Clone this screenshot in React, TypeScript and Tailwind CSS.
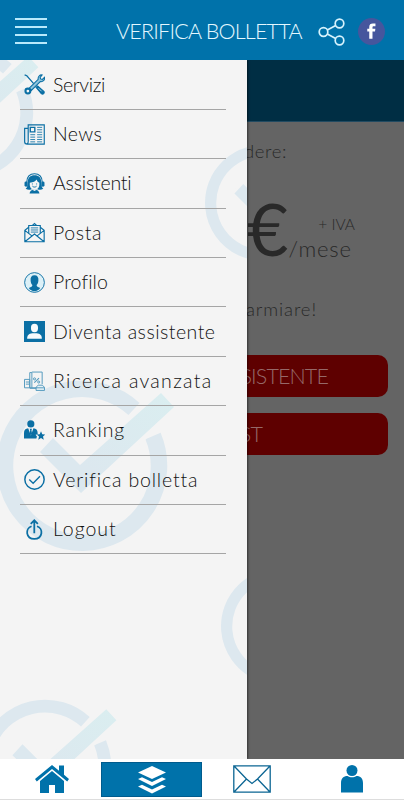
import type { ReactNode } from 'react'

const BLUE = '#0b6fa4'

function Icon({ children }: { children: ReactNode }) {
  return (
    <svg viewBox="0 0 20 20" className="w-[21px] h-[21px] shrink-0" fill="none" stroke={BLUE} strokeWidth="1.1">
      {children}
    </svg>
  )
}

const items = [
  {
    label: 'Servizi',
    tracking: 'tracking-[-0.35px]',
    icon: (
      <Icon>
        <path d="M.6.8l2.100.9 6.500 7.500" strokeWidth="1.200" />
        <path d="M11.500 12.700l1.500-1.300 5.800 5.100c1.200 1.700-.7 3.500-2.300 2.200z" fill={BLUE} />
        <path d="M13.800 13.500l3 3" stroke="#d9edf5" strokeWidth=".7" />
        <path d="M5 13.500l8.500-8.500c-.4-2.400 1.500-4.500 3.800-4.100l-1.900 2.300.4 1.500 1.700.4 2-1.900c.5 2.700-1.500 4.500-4 4L7 15.600z" fill="#8fc5dd" strokeWidth="1" />
        <circle cx="3.700" cy="16.200" r="2.300" fill="#f4f4f4" strokeWidth="2" />
      </Icon>
    ),
  },
  {
    label: 'News',
    tracking: 'tracking-[0.4px]',
    icon: (
      <Icon>
        <path d="M4 .8h15.300v18.400H3c-1.500 0-2.400-.8-2.400-2.200V4.200H4zM4 4v12.800c0 1.200-.5 1.800-1.300 2.200" />
        <path d="M6 3.200h4.300v4.300H6z" strokeWidth="1.300" />
        <path d="M12.500 3.200h4.800M12.500 5.500h4.800M12.500 7.800h4.800M6 10.200h4.600M6 12.500h4.600M6 14.800h4.600M6 17h4.600M12.500 10.200h4.800M12.500 12.500h4.800M12.500 14.800h4.800M12.500 17h4.800" strokeWidth=".8" />
      </Icon>
    ),
  },
  {
    label: 'Assistenti',
    tracking: 'tracking-[-0.2px]',
    icon: (
      <Icon>
        <path d="M2.600 9C2.500 3.400 5.600.7 10 .7S17.500 3.400 17.400 9" strokeWidth="1.100" />
        <path d="M3.600 9C3.500 4.600 6 2.200 10 2.200s6.500 2.400 6.400 6.800c.2 3 .4 4.600 2 6.100-2 1.300-4.300 1-5.400.4H7c-1.100.6-3.400.9-5.400-.4 1.600-1.500 1.800-3.100 2-6.100z" fill={BLUE} stroke="none" />
        <path d="M5.500 9.300c3.600-.2 5.100-1.300 6.600-3 .5 1.800 1.300 2.700 2.500 3v2c0 3-2.100 4.700-4.500 4.700s-4.600-1.700-4.600-4.700z" fill="#f4f4f4" stroke="none" />
        <path d="M5.300 19.500c.2-2 1.500-3.200 3-3.400l1.700 1 1.700-1c1.500.2 2.800 1.400 3 3.400z" fill={BLUE} stroke="none" />
        <rect x=".5" y="8" width="3" height="5" rx="1.400" fill={BLUE} stroke="none" />
        <rect x="16.500" y="8" width="3" height="5" rx="1.400" fill={BLUE} stroke="none" />
        <path d="M8 12.500c1.100 1.200 2.900 1.200 4 0M8 10v.9M12 10v.9" strokeWidth=".9" />
      </Icon>
    ),
  },
  {
    label: 'Posta',
    tracking: 'tracking-[0.65px]',
    icon: (
      <Icon>
        <path d="M4.500 5L.8 8v10.800h18.400V8l-3.700-3M.8 8l6.700 5.200M19.200 8l-6.700 5.200M.8 18.800L10 11.400l9.200 7.400" />
        <path d="M4.500 10.600V3.300h11v7.300M8 3.200l2-1.800 2 1.800" />
        <path d="M6.500 5.600h7M6.500 7.600h7M6.500 9.600h7" strokeWidth=".8" />
      </Icon>
    ),
  },
  {
    label: 'Profilo',
    tracking: 'tracking-[0.1px]',
    icon: (
      <Icon>
        <circle cx="10" cy="10" r="9.400" fill="#dcf0f7" strokeWidth=".9" />
        <path d="M10 3.200c2.800 0 4 2 3.700 4.800-.1 2-.7 3.500-1.700 4.400.1 1.600 1 1.800 3.400 2.900-1.300 2-3.200 3-5.400 3s-4.100-1-5.400-3c2.400-1.100 3.300-1.300 3.400-2.900-1-.9-1.600-2.400-1.700-4.400C6 5.200 7.200 3.200 10 3.200z" fill={BLUE} stroke="none" />
      </Icon>
    ),
  },
  {
    label: 'Diventa assistente',
    tracking: 'tracking-[0.5px]',
    icon: (
      <Icon>
        <path d="M0 0h20v20H0z" fill={BLUE} stroke="none" />
        <ellipse cx="10" cy="6.700" rx="3.400" ry="4" fill="#f6fafc" stroke="none" />
        <path d="M3 17c0-3.500 1.400-4.700 5-5.300h4c3.600.6 5 1.800 5 5.300z" fill="#f6fafc" stroke="none" />
      </Icon>
    ),
  },
  {
    label: 'Ricerca avanzata',
    tracking: 'tracking-[1.3px]',
    icon: (
      <svg viewBox="0 0 20 20" className="w-[21px] h-[21px] shrink-0" fill="none" stroke="#4f97bc" strokeWidth=".9">
        <path d="M5.500 16V1.500h2V16M7.500 1h9.800v11.500M.5 8h5v8h6M.5 8v8h5M1.800 10.500H5M1.800 12.500H5" />
        <path d="M9.800 11l4.500-4.200" strokeWidth="1" />
        <circle cx="10" cy="7.500" r="1" />
        <circle cx="14" cy="10.500" r="1" />
        <path d="M11.500 15.500l2-2h4l2 2v3h-8z" fill="#e6f1f6" />
        <path d="M5.500 16.500h6M11.500 16h8" />
      </svg>
    ),
  },
  {
    label: 'Ranking',
    tracking: 'tracking-[0.85px]',
    icon: (
      <svg viewBox="0 0 20 20" className="w-[21px] h-[21px] shrink-0" fill={BLUE}>
        <circle cx="6.500" cy="3.700" r="3.400" />
        <path d="M0 17.500v-5.200C0 9.500 1.500 8 4 7.800l2.500 7 2.500-7c2.500.2 4 1.700 4 4.500v1.200l-2 .6 1.300 1.700-.5 1.700z" />
        <path d="M5.400 8.300h2.200l-.5 1.500.6 3.200-1.200 1.500L5.300 13l.6-3.200z" />
        <path d="M16.200 10.800l1.200 2.800 2.900.2-2.200 2 .7 3-2.600-1.600-2.600 1.600.7-3-2.200-2 2.900-.2z" />
      </svg>
    ),
  },
  {
    label: 'Verifica bolletta',
    tracking: 'tracking-[0.85px]',
    icon: (
      <Icon>
        <circle cx="10" cy="10" r="9.200" strokeWidth="1.400" />
        <path d="M5 10l3.700 3.500 6.500-6.500" strokeWidth="1.300" />
      </Icon>
    ),
  },
  {
    label: 'Logout',
    tracking: 'tracking-[0.95px]',
    icon: (
      <Icon>
        <path d="M7.200 6.900c-6.300 2-5.600 11.900 2.600 12.100 8.200-.2 8.900-10.100 2.600-12.100" strokeWidth="1.700" />
        <path d="M9.800 13.500V1.500M6.400 4.700l3.400-3.400 3.400 3.400" strokeWidth="1.700" />
      </Icon>
    ),
  },
]

// Ring with a check running through it, centred on 0,0
function Mark({ x, y, scale }: { x: number; y: number; scale: number }) {
  return (
    <g transform={`translate(${x} ${y}) scale(${scale})`}>
      <path d="M52 -57A77 77 0 1 0 71 -30" fill="none" stroke="#dde8ef" strokeWidth="16.500" />
      <path
        d="M-42 -14L-29 -28L-2 -1L79 -73L92 -59L-1 27Z"
        fill="url(#check)"
        stroke="#f4f4f4"
        strokeWidth="9"
        paintOrder="stroke"
      />
    </g>
  )
}

function Header() {
  return (
    <header className="h-[60px] shrink-0 bg-[#0072aa] flex items-center">
      <div className="ml-[15px] mt-[2px] w-8 flex flex-col gap-[6px] shrink-0">
        <span className="h-[2px] bg-[#b9e9fb]" />
        <span className="h-[2px] bg-[#b9e9fb]" />
        <span className="h-[2px] bg-[#b9e9fb]" />
        <span className="h-[2px] bg-[#b9e9fb]" />
      </div>
      <h1 className="ml-[69px] mt-[3px] w-[202px] whitespace-nowrap text-[21.500px] tracking-[-0.780px] font-light text-[#e4f8ff]">
        VERIFICA BOLLETTA
      </h1>
      <svg viewBox="0 0 28 28" className="w-7 h-7 shrink-0 mt-[3px]" fill="none" stroke="#d7f3fd" strokeWidth="1.700">
        <circle cx="5.500" cy="14" r="4.300" />
        <circle cx="21.500" cy="5.500" r="4.300" />
        <circle cx="21.500" cy="22.500" r="4.300" />
        <path d="M9.300 12l8.400-4.500M9.300 16l8.400 4.500" />
      </svg>
      <div className="ml-[12px] mt-[2px] w-[27px] h-[27px] rounded-full bg-[#46569d] flex items-center justify-center">
        <svg viewBox="0 0 10 17" className="w-[9px] h-[16px]" fill="#fff">
          <path d="M2.500 17V9H.3V6h2.200V4.200C2.500 1.500 3.900.3 6.500.3h2.900v3H7.500C6.400 3.300 6.100 3.700 6.100 4.600V6h3.200l-.4 3H6.100v8z" />
        </svg>
      </div>
    </header>
  )
}

function Content() {
  return (
    <main className="h-full bg-[#646464] flex flex-col text-right text-[#292929] font-light">
      <div className="h-[62px] bg-[#002e44] border-b border-[#214a61]" />
      <p className="mt-[15px] pr-[117px] h-7 leading-7 text-[18.500px] tracking-[0.6px]">dere:</p>
      <div className="mt-[27px] h-[74px] pr-[49px] flex justify-end">
        <span className="text-[71px] leading-[74px] font-normal">€</span>
        <div className="flex flex-col">
          <span className="mt-[22px] text-[15.500px] leading-5">+ IVA</span>
          <span className="mt-px pr-[3px] text-[22px] leading-7 tracking-[0.900px]">/mese</span>
        </div>
      </div>
      <p className="mt-[29px] pr-[87px] h-7 leading-7 text-[18.500px] tracking-[0.900px]">armiare!</p>
      <div className="mt-8 ml-4 mr-4 h-[42px] rounded-[10px] bg-[#5e0000] pr-[60px] text-[21.500px] leading-[43px] tracking-[-0.900px] text-[#966868]">
        SSISTENTE
      </div>
      <div className="mt-[16px] ml-4 mr-4 h-[42px] rounded-[10px] bg-[#5e0000] pr-[126px] text-[21.500px] leading-[43px] tracking-[-0.900px] text-[#966868]">
        ST
      </div>
    </main>
  )
}

function Drawer() {
  return (
    <aside className="absolute left-0 top-0 w-[247px] h-full bg-[#f4f4f4] shadow-[1px_0_2px_rgba(0,0,0,0.5)] overflow-hidden">
      <svg viewBox="0 60 247 700" className="absolute left-0 top-0 w-[247px] h-[700px]">
        <defs>
          <linearGradient id="check" x1="0" y1="1" x2="1" y2="0">
            <stop offset="0.300" stopColor="#dce8ef" />
            <stop offset="1" stopColor="#daeef0" />
          </linearGradient>
        </defs>
        <Mark x={-33} y={113} scale={0.776} />
        <Mark x={263} y={203} scale={0.68} />
        <Mark x={82} y={466} scale={1} />
        <Mark x={279} y={626.5} scale={0.68} />
        <Mark x={45} y={766} scale={0.776} />
      </svg>
      <nav className="relative pl-5 pr-[21px] pt-[0.500px]">
        {items.map((item) => (
          <a key={item.label} className="h-[49.400px] pl-[3.500px] flex items-center gap-[8.500px] border-b border-[#a5a5a5]">
            {item.icon}
            <span className={`whitespace-nowrap text-[19.500px] leading-6 font-light text-[#111] ${item.tracking}`}>{item.label}</span>
          </a>
        ))}
      </nav>
    </aside>
  )
}

function TabBar() {
  return (
    <footer className="h-[41px] shrink-0 bg-white grid grid-cols-4 border-b border-[#ddd]">
      <div className="flex justify-center">
        <svg viewBox="0 0 34 28" className="ml-[2px] mt-[6px] w-[34px] h-7" fill="#0072aa">
          <path d="M17 0L0 14l1.800 2.500L17 4l15.200 12.500L34 14l-5-4.200V.5h-5v5.200z" />
          <path d="M17 6L5 16v12h9v-8h6v8h9V16z" />
        </svg>
      </div>
      <div className="mt-[3px] mb-[2px] bg-[#0072aa] border border-[#005b8d] flex justify-center">
        <svg viewBox="0 0 28 28" className="mt-[3px] w-7 h-7" fill="#fff">
          <path d="M14 0l14 6.500L14 13 0 6.500z" />
          <path d="M0 13l4-1.800 10 4.800 10-4.800 4 1.800-14 7z" />
          <path d="M0 20.500l4-1.800 10 4.800 10-4.800 4 1.800-14 7z" />
        </svg>
      </div>
      <div className="flex justify-center">
        <svg viewBox="0 0 38 28" className="mt-[6px] -ml-px w-[38px] h-7" fill="none" stroke="#0b6593" strokeWidth="1.300">
          <path d="M.8.8h36.400v26.400H.8zM.8.800l12.700 13.200 5.500 4.500 5.500-4.500L37.200.8M.8 27.200l12.700-13.200M37.200 27.200L24.500 14" />
        </svg>
      </div>
      <div className="flex justify-center">
        <svg viewBox="0 0 22 28" className="mt-[6px] -ml-[4px] w-[22px] h-7" fill="#0072aa">
          <circle cx="11" cy="5.500" r="5.500" />
          <path d="M0 27.500V18c0-4.500 2.500-7 6.500-7 2.500 1.700 6.500 1.700 9 0 4 0 6.500 2.500 6.500 7v9.500z" />
        </svg>
      </div>
    </footer>
  )
}

export default function App() {
  return (
    <div className="w-[404px] h-[800px] flex flex-col overflow-hidden font-['Lato',sans-serif]">
      <Header />
      <div className="relative flex-1 min-h-0 overflow-hidden">
        <Content />
        <Drawer />
      </div>
      <TabBar />
    </div>
  )
}
